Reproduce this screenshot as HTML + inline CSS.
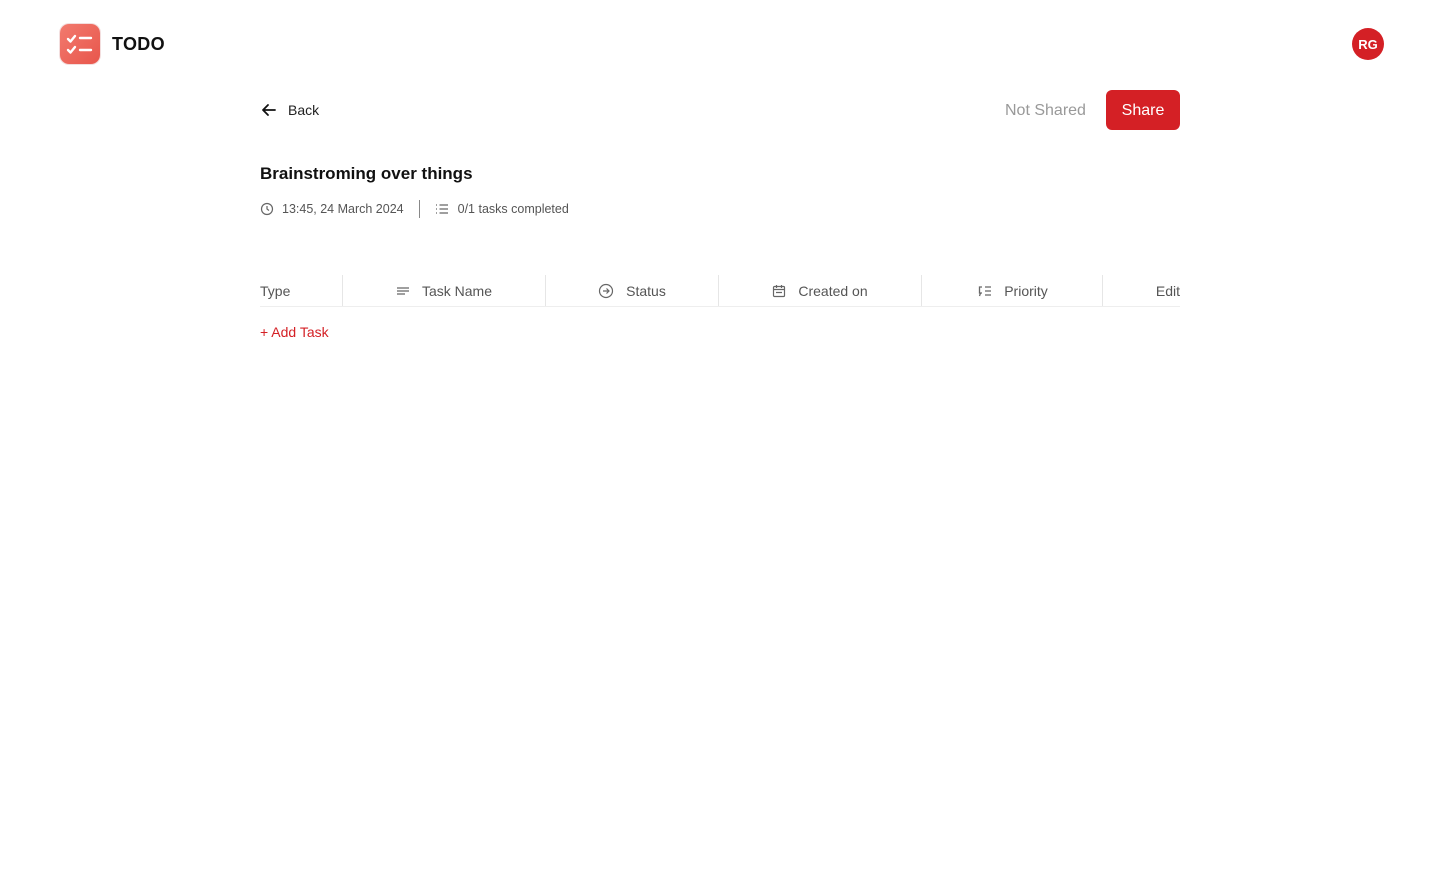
<!DOCTYPE html>
<html><head><meta charset="utf-8"><style>
*{margin:0;padding:0;box-sizing:border-box}
body{width:1440px;height:880px;background:#fff;font-family:"Liberation Sans",sans-serif;position:relative;overflow:hidden;color:#111}
.abs{position:absolute}
.logo{left:60px;top:24px;width:40px;height:40px;border-radius:9px;background:linear-gradient(135deg,#f27a6e,#e8564c);box-shadow:0 0 0 1px #f3dede}
.brand{left:112px;top:34px;font-size:18px;font-weight:bold;letter-spacing:.3px}
.avatar{left:1352px;top:28px;width:32px;height:32px;border-radius:50%;background:#d42025;color:#fff;font-size:13px;font-weight:bold;display:flex;align-items:center;justify-content:center}
.back{left:260px;top:101px;display:flex;align-items:center;gap:10px;font-size:14px;color:#222}
.ns{left:1005px;top:102px;font-size:16px;color:#999}
.share{left:1106px;top:90px;width:74px;height:40px;border-radius:6px;background:#d42025;color:#fff;font-size:16px;display:flex;align-items:center;justify-content:center;padding-top:2px}
h1{position:absolute;left:260px;top:164px;font-size:17px;font-weight:bold;color:#111}
.meta{left:260px;top:201px;display:flex;align-items:center;font-size:12.5px;color:#555;gap:7px;height:16px}
.sep{width:1px;height:18px;background:#888;margin:0 8px}
.hdr{left:260px;top:275px;width:920px;height:32px;border-bottom:1px solid #eee;font-size:14px;color:#555}
.col{position:absolute;top:0;height:31px;display:flex;align-items:center;justify-content:center;gap:12px}
.div{position:absolute;top:0;width:1px;height:31px;background:#e6e6e6}
.add{left:260px;top:324px;font-size:14px;color:#d42025}
</style></head><body>
<div class="abs logo"><svg width="40" height="40" viewBox="0 0 40 40" fill="none" stroke="#fff" stroke-width="2.4" stroke-linecap="round" stroke-linejoin="round"><path d="M8 15l2.5 2.5L15 12"/><path d="M8 26l2.5 2.5L15 23"/><path d="M20 14h11M20 26h11"/></svg></div>
<div class="abs brand">TODO</div>
<div class="abs avatar">RG</div>
<div class="abs back"><svg width="18" height="18" viewBox="0 0 18 18" fill="none" stroke="#111" stroke-width="1.8" stroke-linecap="round" stroke-linejoin="round"><path d="M15 9H3M8 4L3 9l5 5"/></svg>Back</div>
<div class="abs ns">Not Shared</div>
<div class="abs share">Share</div>
<h1>Brainstroming over things</h1>
<div class="abs meta"><svg width="14" height="14" viewBox="0 0 14 14" fill="none" stroke="#666" stroke-width="1.2"><circle cx="7" cy="7" r="5.5"/><path d="M7 4v3l2 1.5"/></svg><span style="margin-left:1px">13:45, 24 March 2024</span><span class="sep"></span><svg width="14" height="14" viewBox="0 0 14 14" fill="none" stroke="#666" stroke-width="1.2"><path d="M1 3h1M1 7h1M1 11h1M4.5 3H13M4.5 7H13M4.5 11H13"/></svg><span style="margin-left:2px">0/1 tasks completed</span></div>
<div class="abs hdr">
 <div class="col" style="left:0;justify-content:flex-start">Type</div>
 <div class="div" style="left:82px"></div>
 <div class="col" style="left:83px;width:202px"><svg width="14" height="14" viewBox="0 0 14 14" stroke="#666" stroke-width="1.3"><path d="M1 4h12M1 7h12M1 10h8"/></svg>Task Name</div>
 <div class="div" style="left:285px"></div>
 <div class="col" style="left:286px;width:172px"><svg width="16" height="16" viewBox="0 0 16 16" fill="none" stroke="#666" stroke-width="1.2"><circle cx="8" cy="8" r="6.5"/><path d="M5 8h6M8.5 5.5L11 8l-2.5 2.5"/></svg>Status</div>
 <div class="div" style="left:458px"></div>
 <div class="col" style="left:459px;width:202px"><svg width="14" height="14" viewBox="0 0 14 14" fill="none" stroke="#666" stroke-width="1.2"><rect x="1.5" y="2.5" width="11" height="10" rx="1"/><path d="M1.5 5.5h11M4.5 1v3M9.5 1v3M4 8.5h6"/></svg>Created on</div>
 <div class="div" style="left:661px"></div>
 <div class="col" style="left:662px;width:180px"><svg width="16" height="14" viewBox="0 0 16 14" fill="none" stroke="#666" stroke-width="1.3"><path d="M6 3H3.5v6H6M4.5 9l-1 3M9 3h6M9 7h6M9 11h6"/></svg>Priority</div>
 <div class="div" style="left:842px"></div>
 <div class="col" style="left:843px;width:77px;justify-content:flex-end">Edit</div>
</div>
<div class="abs add">+ Add Task</div>
</body></html>
